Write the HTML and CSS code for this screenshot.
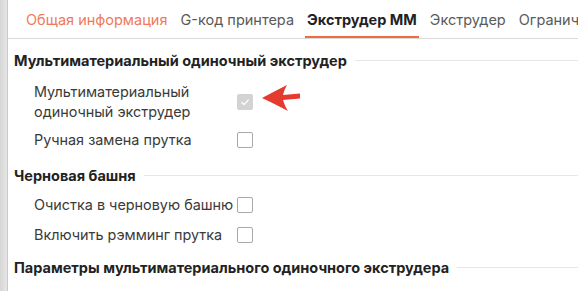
FILE: index.html
```html
<!DOCTYPE html>
<html lang="ru">
<head>
    <meta charset="UTF-8">
    <title>Экструдер ММ</title>
    <link rel="stylesheet" href="styles.css">
</head>
<body>

<div class="window">
    <div class="side-strip"></div>
    <div class="page">
        <div class="tabs">
            <div class="tab tab-visited">Общая информация</div>
            <div class="tab">G-код принтера</div>
            <div class="tab tab-active">Экструдер ММ</div>
            <div class="tab">Экструдер</div>
            <div class="tab">Ограничения</div>
        </div>

        <div class="content">
            <div class="section-title"><span>Мультиматериальный одиночный экструдер</span></div>
            <div class="option option-tall">
                <label>Мультиматериальный<br>одиночный экструдер</label>
                <span class="checkbox checked-disabled">
                    <svg viewBox="0 0 16 16" width="16" height="16"><path d="M4.5 8.3 L7 10.6 L11.6 5.8" fill="none" stroke="#fff" stroke-width="1.3"/></svg>
                </span>
                <svg class="arrow" viewBox="0 0 42 30" width="42" height="30">
                    <path d="M2 15 Q15 8 27 2 Q24 7 23 12 L40 10.5 L40 15.5 L23 17 Q24.5 22.5 28 28 Q15 21 2 15 Z" fill="#e53a2f"/>
                </svg>
            </div>
            <div class="option">
                <label>Ручная замена прутка</label>
                <span class="checkbox"></span>
            </div>

            <div class="section-title"><span>Черновая башня</span></div>
            <div class="option">
                <label>Очистка в черновую башню</label>
                <span class="checkbox"></span>
            </div>
            <div class="option">
                <label>Включить рэмминг прутка</label>
                <span class="checkbox"></span>
            </div>

            <div class="section-title section-last"><span>Параметры мультиматериального одиночного экструдера</span></div>
        </div>
    </div>
</div>

</body>
</html>
```

FILE: styles.css
```css
body {
    margin: 0;
    font-family: Inter, "Noto Sans", sans-serif;
    background-color: #fff;
    overflow: hidden;
}
.window {
    display: flex;
    height: 291px;
}
.side-strip {
    width: 7px;
    background: linear-gradient(to right, #d6d6d6, #e6e6e6);
    border-right: 1px solid #c8c8c8;
    flex-shrink: 0;
}
.page {
    flex: 1;
    min-width: 0;
}
.tabs {
    display: flex;
    gap: 13px;
    height: 38px;
    padding-left: 18px;
    border-bottom: 1px solid #d9d9d9;
    white-space: nowrap;
    overflow: hidden;
    align-items: flex-end;
}
.tab {
    font-size: 14.5px;
    color: #5a5a5a;
    padding-bottom: 8px;
    border-bottom: 3px solid transparent;
    margin-bottom: -1px;
}
.tab-visited {
    color: #f07a58;
}
.tab-active {
    color: #222;
    font-weight: 700;
    border-bottom-color: #f26b3a;
    border-radius: 1px;
    padding: 0 2px 8px;
    margin: 0 -2px -1px;
}
.content {
    padding-left: 6px;
}
.section-title {
    display: flex;
    align-items: center;
    gap: 8px;
    font-size: 14.5px;
    font-weight: 700;
    color: #222;
    height: 30px;
    margin-top: 5px;
}
.section-title:first-child {
    margin-top: 6px;
}
.section-last {
    margin-top: 2px;
}
.section-title::after {
    content: "";
    flex: 1;
    height: 1px;
    background-color: #e6e6e6;
}
.option {
    display: flex;
    align-items: center;
    height: 30px;
    padding-left: 20px;
    font-size: 14.4px;
    color: #3a3a3a;
}
.option-tall {
    height: 46px;
    padding-top: 4px;
}
.option label {
    width: 203px;
    line-height: 20px;
}
.checkbox {
    width: 14px;
    height: 14px;
    border: 1px solid #a8a8a8;
    border-radius: 2px;
    background-color: #fff;
    display: flex;
}
.checked-disabled {
    background-color: #d3d3d3;
    border-color: #d3d3d3;
}
.checked-disabled svg {
    margin: -1px;
}
.arrow {
    margin-left: 7px;
    margin-bottom: 9px;
}
```
